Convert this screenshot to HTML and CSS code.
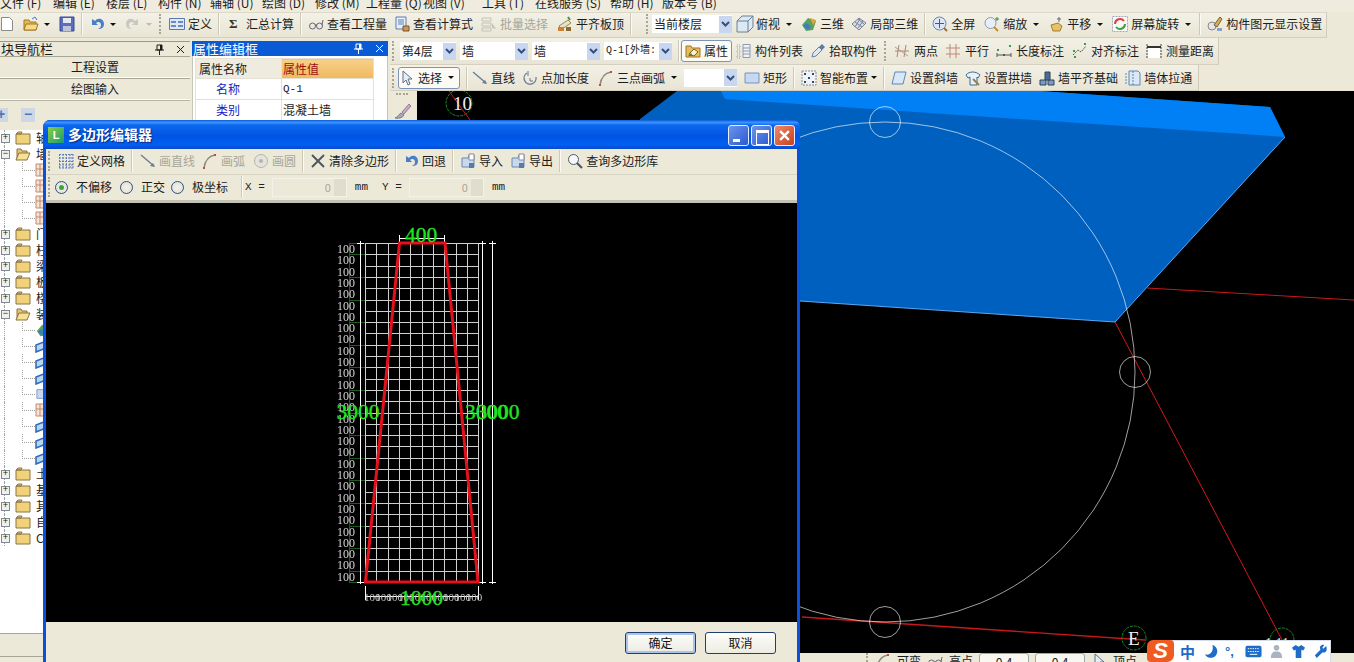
FILE: index.html
```html
<!DOCTYPE html>
<html lang="zh">
<head>
<meta charset="utf-8">
<title>多边形编辑器</title>
<link rel="stylesheet" href="styles.css">
</head>
<body>
<svg class="defs" width="0" height="0">
  <symbol id="new" viewBox="0 0 16 16"><path d="M1.500 1.500h8l3 3v10h-11z" fill="#fff" stroke="#8a8a8a"/></symbol>
  <symbol id="open" viewBox="0 0 16 16"><path d="M1 4h5l1 2h6v8H1z" fill="#e8b850" stroke="#a07820"/><path d="M3 8h12l-2 6H1z" fill="#f6d98a" stroke="#a07820"/><path d="M9 3l3-2 2 3" fill="none" stroke="#3a7ad0"/></symbol>
  <symbol id="save" viewBox="0 0 16 16"><path d="M1 1h14v14H1z" fill="#5a6fb8" stroke="#3a4a90"/><path d="M4 2h8v5H4z" fill="#e8e8f4"/><path d="M4 10h8v5H4z" fill="#c0c4d8"/></symbol>
  <symbol id="undo" viewBox="0 0 16 16"><path d="M3 3v6h6L7 7c2-2 5-1 5 2 0 2-1 3-3 4 4 0 6-2 6-5 0-5-6-7-9-3z" fill="#4a7ec8"/></symbol>
  <symbol id="redo" viewBox="0 0 16 16"><path d="M13 3v6H7l2-2C7 5 4 6 4 9c0 2 1 3 3 4-4 0-6-2-6-5 0-5 6-7 9-3z" fill="#c8c8c0"/></symbol>
  <symbol id="def" viewBox="0 0 16 16"><path d="M.5 2.500h15v11H.5z" fill="#dfe8f6" stroke="#5a7ab0"/><path d="M2 5h5v2H2zM9 5h5v2H9zM2 9h5v2H2zM9 9h5v2H9z" fill="#6a8ac0"/></symbol>
  <symbol id="glass" viewBox="0 0 16 16"><circle cx="4.500" cy="10" r="3" fill="none" stroke="#667"/><circle cx="11.500" cy="10" r="3" fill="none" stroke="#667"/><path d="M7 9h2M14 9l1-5" stroke="#667" fill="none"/></symbol>
  <symbol id="calc" viewBox="0 0 16 16"><path d="M2 1h10v12H2z" fill="#e8f0fa" stroke="#5a7ab0"/><path d="M4 4h6M4 6h6M4 8h6" stroke="#5a7ab0"/><path d="M9 10h6v5H9z" fill="#c89860" stroke="#805020"/></symbol>
  <symbol id="batch" viewBox="0 0 16 16"><path d="M1 2h9v3H1zM1 7h9v3H1zM1 12h9v3H1z" fill="none" stroke="#c4c2b6"/><path d="M11 7l4 6-4-1z" fill="#c4c2b6"/></symbol>
  <symbol id="align" viewBox="0 0 16 16"><path d="M2 10l9-6 3 3-9 6z" fill="#e8e2c8" stroke="#9a8850"/><path d="M1 11h6v4H1z" fill="#d08030"/><path d="M9 11h5v4H9z" fill="#8a6a30"/><path d="M11 1l2 3" stroke="#3a9a50" stroke-width="2"/></symbol>
  <symbol id="cube" viewBox="0 0 18 18"><path d="M1 6l5-5h11v11l-5 5H1z" fill="#dce8f4" stroke="#6a8098"/><path d="M1 6h11v11M12 6l5-5" fill="none" stroke="#6a8098"/></symbol>
  <symbol id="three" viewBox="0 0 16 16"><path d="M1 9l6-7 8 3-3 9-7 1z" fill="#5aa060"/><path d="M9 2l6 2-3 5z" fill="#e8a030"/><path d="M2 10l5 4 3-3-4-4z" fill="#3a7ec0"/></symbol>
  <symbol id="local" viewBox="0 0 16 16"><path d="M1 8l7-6 7 5-7 7z" fill="#d8dce8" stroke="#7a8298"/><path d="M4 6l7 5M7 3l6 5M9 3L4 11M12 5l-5 7" stroke="#7a8298" fill="none"/></symbol>
  <symbol id="full" viewBox="0 0 16 16"><circle cx="7.500" cy="7.500" r="6.500" fill="#dce6f6" stroke="#6a88b8"/><path d="M7.500 3v9M3 7.500h9" stroke="#3a5a90"/><path d="M12 12l3 3" stroke="#a07030" stroke-width="2"/></symbol>
  <symbol id="zoom" viewBox="0 0 16 16"><circle cx="6.500" cy="7" r="5.500" fill="#e8eef8" stroke="#8a9ab8"/><path d="M10 11l4 4" stroke="#c09030" stroke-width="2"/><path d="M13 1v4M11 3h4" stroke="#3a8a3a"/></symbol>
  <symbol id="pan" viewBox="0 0 16 16"><path d="M3 9l7-2 4 3-2 5H5z" fill="#e8c068" stroke="#a08030"/><path d="M11 1v5M9 3h4" stroke="#667"/></symbol>
  <symbol id="rot" viewBox="0 0 16 16"><path d="M.5.5h15v15H.5z" fill="#f8f8f4" stroke="#a0a8c0" stroke-dasharray="2 1"/><path d="M3 8a5 5 0 0 1 9-3" fill="none" stroke="#e04040" stroke-width="2"/><path d="M13 8a5 5 0 0 1-9 3" fill="none" stroke="#40a040" stroke-width="2"/></symbol>
  <symbol id="disp" viewBox="0 0 16 16"><circle cx="5" cy="10" r="4" fill="#e4e4ec" stroke="#888"/><path d="M7 9l6-8 2 2-5 8z" fill="#d0b060" stroke="#806020"/><path d="M10 12h5v3h-5z" fill="#8aa0c8"/></symbol>
  <symbol id="prop" viewBox="0 0 16 16"><path d="M1 3h5l1 2h8v9H1z" fill="#e6bb58" stroke="#a07828"/><path d="M4 11l5-5 4 3-4 4z" fill="#f8f0d0" stroke="#806020"/><path d="M3 13l3-3 2 3z" fill="#3a8a50"/></symbol>
  <symbol id="list" viewBox="0 0 16 16"><path d="M1 2h3v3H1zM1 7h3v3H1zM1 12h3v3H1z" fill="none" stroke="#9aa" stroke-dasharray="1 1"/><path d="M7 1.500h7v13H7z" fill="#eef2f8" stroke="#8a9ab0"/><path d="M7 5h7M7 8h7M7 11h7" stroke="#8a9ab0"/></symbol>
  <symbol id="pick" viewBox="0 0 16 16"><path d="M2 14l1-4 6-6 3 3-6 6z" fill="#dce8f4" stroke="#6a80a0"/><path d="M9 4l3-3 3 3-3 3z" fill="#5a7ab0"/></symbol>
  <symbol id="brush" viewBox="0 0 18 18"><path d="M1 16c3-1 4-4 6-5l3 2c-1 2-4 4-9 3z" fill="#a8a8b0" stroke="#807c88"/><path d="M8 10l7-8 2 2-7 8z" fill="#c8a8c8" stroke="#988098"/></symbol>
  <symbol id="two" viewBox="0 0 16 16"><path d="M1 8h14M5 2L3 14M12 2l-2 12" stroke="#a88878" fill="none"/><path d="M1 4l13 9" stroke="#b09a88"/></symbol>
  <symbol id="par" viewBox="0 0 16 16"><path d="M1 5h14M1 11h14M5 1v14M11 1v14" stroke="#c08878" fill="none"/></symbol>
  <symbol id="len" viewBox="0 0 16 16"><path d="M1 12h14M1 10v4M15 10v4M7 11l2 2M7 13l2-2" stroke="#555" fill="none"/><path d="M1 7h2M13 3h2" stroke="#3a9a50" stroke-width="2"/></symbol>
  <symbol id="alg" viewBox="0 0 16 16"><path d="M2 12l5-5 3 2 5-6" stroke="#555" fill="none" stroke-dasharray="2 1"/><path d="M2 8h2M13 1h2M3 14h2" stroke="#3a9a50" stroke-width="2"/></symbol>
  <symbol id="meas" viewBox="0 0 16 16"><path d="M2 4h12v11H2z" fill="#fff"/><path d="M1 1v15M15 1v15" stroke="#444" stroke-dasharray="2 1"/><path d="M1 4h14" stroke="#333" stroke-width="2"/></symbol>
  <symbol id="cur" viewBox="0 0 16 16"><path d="M4 1v12l3-3 2 5 2-1-2-5h4z" fill="#e8eef8" stroke="#5a7090"/></symbol>
  <symbol id="line" viewBox="0 0 16 16"><path d="M1 2l13 11" stroke="#6a7a90" stroke-width="1.300"/><path d="M15 14l-5-1 3-3z" fill="#6a7a90"/></symbol>
  <symbol id="add" viewBox="0 0 16 16"><path d="M5 3a6 6 0 1 0 9 4" fill="none" stroke="#6a7a90" stroke-width="1.300"/><path d="M6 1v5M8 8v3h3" stroke="#6a7a90" fill="none"/></symbol>
  <symbol id="arc" viewBox="0 0 16 16"><path d="M2 15C3 8 7 3 13 2" fill="none" stroke="#8a8a80" stroke-width="1.500"/><path d="M1 14h2v2H1zM12 1h2v2h-2z" fill="#c05030"/></symbol>
  <symbol id="rect" viewBox="0 0 16 16"><path d="M1 3h14v10H1z" fill="#c6d8f2" stroke="#7a94bc"/></symbol>
  <symbol id="smart" viewBox="0 0 16 16"><path d="M1 1h14v14H1z" fill="#f0f2f6" stroke="#8a8a8a" stroke-dasharray="2 1"/><path d="M7 7h2v2H7zM3 3h2v2H3zM11 3h2v2h-2zM3 11h2v2H3zM11 11h2v2h-2z" fill="#2a4a80"/></symbol>
  <symbol id="slant" viewBox="0 0 16 16"><path d="M4 2h11l-3 12H1z" fill="#d8e8f8" stroke="#5a88b8"/></symbol>
  <symbol id="archw" viewBox="0 0 16 16"><path d="M1 5c3-4 10-4 14 0l-2 3-1-1v8H5V7L3 8z" fill="#e8f0f8" stroke="#3a6a90"/><path d="M8 9l6 6" stroke="#a08040" stroke-width="2"/></symbol>
  <symbol id="base" viewBox="0 0 16 16"><path d="M1 10h6v5H1zM9 10h6v5H9z" fill="#7a98c8" stroke="#345"/><path d="M6 2h5v8H6z" fill="#4a6a9a" stroke="#345"/></symbol>
  <symbol id="pull" viewBox="0 0 16 16"><path d="M4 1h9l2 2v12H4z" fill="#dce8f6" stroke="#5a88b0"/><path d="M1 3v11M8 1v14" stroke="#5a88b0" stroke-dasharray="2 1"/></symbol>
  <symbol id="grid" viewBox="0 0 16 16"><path d="M1.500 1v14M5 1v14M8.500 1v14M12 1v14M15 1v14M1 1.500h14M1 5h14M1 8.500h14M1 12h14M1 15h14" stroke="#5a80c0" stroke-dasharray="2 1"/></symbol>
  <symbol id="cross" viewBox="0 0 16 16"><path d="M2 2l12 12M14 2L2 14" stroke="#50585e" stroke-width="2"/></symbol>
  <symbol id="circ" viewBox="0 0 16 16"><circle cx="8" cy="8" r="6.500" fill="#e4e4dc" stroke="#b4b4ac"/><circle cx="8" cy="8" r="2" fill="#b4b4ac"/></symbol>
  <symbol id="imp" viewBox="0 0 16 16"><path d="M2 5h6l1-3h5v12H2z" fill="#c8d8ee" stroke="#6a88b0"/><path d="M9 1h5v6H9z" fill="#fff" stroke="#889"/><path d="M9 10h5v5H9z" fill="#5a78a8"/></symbol>
  <symbol id="find" viewBox="0 0 16 16"><circle cx="6.500" cy="6.500" r="5" fill="#f4f8fc" stroke="#556"/><path d="M10 10l5 5" stroke="#556" stroke-width="2.200"/></symbol>
  <symbol id="closed" viewBox="0 0 16 14"><path d="M1 3h5l1-2H3L1 3zM1 3h14v10H1z" fill="#f0d27a" stroke="#8a7440"/></symbol>
  <symbol id="opened" viewBox="0 0 16 14"><path d="M2 13V2h4l1 2h5v2" fill="#e8c468" stroke="#8a7440"/><path d="M1 13l3-7h11l-3 7z" fill="#f8e098" stroke="#8a7440"/></symbol>
  <symbol id="leaf" viewBox="0 0 16 14"><path d="M1 1h14v12H1z" fill="#f4e4d8" stroke="#c88868"/><path d="M1 6h14M5 1v12" stroke="#c88868"/></symbol>
  <symbol id="leafb" viewBox="0 0 16 14"><path d="M1 13l10-4V2L1 6z" fill="#bcd4f0" stroke="#2a6ab8" stroke-width="1.500"/></symbol>
  <symbol id="pin" viewBox="0 0 9 11"><path d="M2 1h5v5H2zM0 6h9M4.500 6v5" fill="none" stroke="currentColor"/><path d="M5 1h2v5H5z" fill="currentColor"/></symbol>
  <symbol id="close" viewBox="0 0 9 9"><path d="M1 1l7 7M8 1L1 8" stroke="currentColor"/></symbol>
  <symbol id="chev" viewBox="0 0 9 6"><path d="M1 1l3.500 3.500L8 1" fill="none" stroke="#34507c" stroke-width="2"/></symbol>
</svg>

<div class="menu">
  <span>文件 (F)</span><span>编辑 (E)</span><span>楼层 (L)</span><span>构件 (N)</span><span>辅轴 (U)</span><span>绘图 (D)</span><span>修改 (M)</span><span>工程量 (Q)</span><span>视图 (V)</span><span>工具 (T)</span><span>在线服务 (S)</span><span>帮助 (H)</span><span>版本号 (B)</span>
</div>

<div class="bar bar-top">
  <svg class="ic"><use href="#new"/></svg>
  <svg class="ic"><use href="#open"/></svg><i class="drop"></i>
  <svg class="ic"><use href="#save"/></svg>
  <i class="sep"></i>
  <svg class="ic"><use href="#undo"/></svg><i class="drop"></i>
  <svg class="ic"><use href="#redo"/></svg><i class="drop off"></i>
  <i class="grip grip-defs"></i>
  <span class="tool"><svg class="ic"><use href="#def"/></svg>定义</span>
  <i class="sep"></i>
  <span class="tool"><b class="sigma">Σ</b>汇总计算</span>
  <i class="sep"></i>
  <span class="tool"><svg class="ic"><use href="#glass"/></svg>查看工程量</span>
  <span class="tool"><svg class="ic"><use href="#calc"/></svg>查看计算式</span>
  <span class="tool off ml1"><svg class="ic"><use href="#batch"/></svg>批量选择</span>
  <span class="tool ml2"><svg class="ic"><use href="#align"/></svg>平齐板顶</span>
  <i class="sep"></i>
  <i class="grip gap-grip"></i>
  <span class="sel sel-floor"><span class="sel-text">当前楼层</span><span class="sel-btn"><svg class="chev"><use href="#chev"/></svg></span></span>
  <span class="tool tool-view"><svg class="ic ic-lg"><use href="#cube"/></svg>俯视<i class="drop"></i></span>
  <span class="tool"><svg class="ic"><use href="#three"/></svg>三维</span>
  <span class="tool"><svg class="ic"><use href="#local"/></svg>局部三维</span>
  <i class="sep"></i>
  <span class="tool"><svg class="ic"><use href="#full"/></svg>全屏</span>
  <span class="tool ml2"><svg class="ic"><use href="#zoom"/></svg>缩放<i class="drop"></i></span>
  <span class="tool"><svg class="ic"><use href="#pan"/></svg>平移<i class="drop"></i></span>
  <span class="tool"><svg class="ic"><use href="#rot"/></svg>屏幕旋转<i class="drop"></i></span>
  <i class="sep"></i>
  <span class="tool"><svg class="ic"><use href="#disp"/></svg>构件图元显示设置</span>
</div>

<div class="workspace">
  <aside class="nav">
    <div class="pane-head"><span>块导航栏</span><span class="pane-ctl"><svg class="pin"><use href="#pin"/></svg><svg class="x"><use href="#close"/></svg></span></div>
    <div class="nav-btn">工程设置</div>
    <div class="nav-btn">绘图输入</div>
    <div class="tree-tools"><span class="mini mini-plus">+</span><span class="mini">−</span></div>
    <ul class="tree">
      <li><i class="box">+</i><svg class="fold"><use href="#closed"/></svg>轴网</li>
      <li><i class="box">−</i><svg class="fold"><use href="#opened"/></svg>墙</li>
      <li class="kid"><svg class="leaf"><use href="#leaf"/></svg></li>
      <li class="kid"><svg class="leaf"><use href="#leaf"/></svg></li>
      <li class="kid"><svg class="leaf"><use href="#leaf"/></svg></li>
      <li class="kid"><svg class="leaf"><use href="#leaf"/></svg></li>
      <li><i class="box">+</i><svg class="fold"><use href="#closed"/></svg>门窗洞</li>
      <li><i class="box">+</i><svg class="fold"><use href="#closed"/></svg>柱</li>
      <li><i class="box">+</i><svg class="fold"><use href="#closed"/></svg>梁</li>
      <li><i class="box">+</i><svg class="fold"><use href="#closed"/></svg>板</li>
      <li><i class="box">+</i><svg class="fold"><use href="#closed"/></svg>楼梯</li>
      <li><i class="box">−</i><svg class="fold"><use href="#opened"/></svg>装修</li>
      <li class="kid"><svg class="leaf"><use href="#three"/></svg></li>
      <li class="kid"><svg class="leaf"><use href="#leafb"/></svg></li>
      <li class="kid"><svg class="leaf"><use href="#leafb"/></svg></li>
      <li class="kid"><svg class="leaf"><use href="#leafb"/></svg></li>
      <li class="kid"><svg class="leaf"><use href="#rect"/></svg></li>
      <li class="kid"><svg class="leaf"><use href="#leaf"/></svg></li>
      <li class="kid"><svg class="leaf"><use href="#leafb"/></svg></li>
      <li class="kid"><svg class="leaf"><use href="#leafb"/></svg></li>
      <li class="kid"><svg class="leaf"><use href="#leafb"/></svg></li>
      <li><i class="box">+</i><svg class="fold"><use href="#closed"/></svg>土方</li>
      <li><i class="box">+</i><svg class="fold"><use href="#closed"/></svg>基础</li>
      <li><i class="box">+</i><svg class="fold"><use href="#closed"/></svg>其它</li>
      <li><i class="box">+</i><svg class="fold"><use href="#closed"/></svg>自定义</li>
      <li><i class="box">+</i><svg class="fold"><use href="#closed"/></svg>CAD识别</li>
    </ul>
    <div class="nav-foot"></div>
    <div class="nav-foot nav-foot-b"></div>
  </aside>

  <section class="props">
    <div class="pane-head pane-active"><span>属性编辑框</span><span class="pane-ctl"><svg class="pin"><use href="#pin"/></svg><svg class="x"><use href="#close"/></svg></span></div>
    <div class="props-body">
      <table class="ptable">
        <tr><th>属性名称</th><th class="val-head">属性值</th></tr>
        <tr><td class="pname">名称</td><td class="mono">Q-1</td></tr>
        <tr><td class="pname">类别</td><td>混凝土墙</td></tr>
      </table>
    </div>
  </section>

  <main class="main">
    <div class="bar bar-two">
      <i class="grip"></i>
      <span class="sel sel-a"><span class="sel-text">第4层</span><span class="sel-btn"><svg class="chev"><use href="#chev"/></svg></span></span>
      <span class="sel sel-b"><span class="sel-text">墙</span><span class="sel-btn"><svg class="chev"><use href="#chev"/></svg></span></span>
      <span class="sel sel-b"><span class="sel-text">墙</span><span class="sel-btn"><svg class="chev"><use href="#chev"/></svg></span></span>
      <span class="sel sel-b"><span class="sel-text sel-mono">Q-1[外墙:</span><span class="sel-btn"><svg class="chev"><use href="#chev"/></svg></span></span>
      <i class="sep"></i>
      <span class="tool pressed pressed-prop"><svg class="ic"><use href="#prop"/></svg>属性</span>
      <span class="tool tool-list"><svg class="ic"><use href="#list"/></svg>构件列表</span>
      <span class="tool"><svg class="ic"><use href="#pick"/></svg>拾取构件</span>
      <i class="grip"></i>
      <span class="tool roomy"><svg class="ic"><use href="#two"/></svg>两点</span>
      <span class="tool roomy"><svg class="ic"><use href="#par"/></svg>平行</span>
      <span class="tool roomy"><svg class="ic"><use href="#len"/></svg>长度标注</span>
      <span class="tool roomy"><svg class="ic"><use href="#alg"/></svg>对齐标注</span>
      <span class="tool roomy"><svg class="ic"><use href="#meas"/></svg>测量距离</span>
    </div>
    <div class="bar bar-three">
      <i class="grip"></i>
      <span class="tool pressed pressed-sel"><svg class="ic"><use href="#cur"/></svg>选择<i class="drop"></i></span>
      <i class="sep"></i>
      <span class="tool tool-line"><svg class="ic"><use href="#line"/></svg>直线</span>
      <span class="tool"><svg class="ic"><use href="#add"/></svg>点加长度</span>
      <span class="tool ml2"><svg class="ic"><use href="#arc"/></svg>三点画弧<i class="drop"></i></span>
      <span class="sel sel-d"><span class="sel-text"></span><span class="sel-btn"><svg class="chev"><use href="#chev"/></svg></span></span>
      <span class="tool"><svg class="ic"><use href="#rect"/></svg>矩形</span>
      <i class="sep"></i>
      <span class="tool tool-smart"><svg class="ic"><use href="#smart"/></svg>智能布置<i class="drop"></i></span>
      <i class="sep"></i>
      <span class="tool"><svg class="ic"><use href="#slant"/></svg>设置斜墙</span>
      <span class="tool"><svg class="ic"><use href="#archw"/></svg>设置拱墙</span>
      <span class="tool"><svg class="ic"><use href="#base"/></svg>墙平齐基础</span>
      <span class="tool"><svg class="ic"><use href="#pull"/></svg>墙体拉通</span>
    </div>
    <div class="stage">
      <div class="side-strip"><i class="strip-grip"></i><svg class="ic-lg"><use href="#brush"/></svg></div>
      <svg class="cad" viewBox="417 91 937 562">
        <polygon points="640,119 677,91 1040,91 1270,107 1285,137 1115,322 800,301 640,301" fill="#0060c0"/>
        <polygon points="721,91 1040,91 1270,107 1285,137 725,99" fill="#0080f4"/>
        <line x1="1285" y1="137" x2="1115" y2="322" stroke="#5aa8f0"/>
        <line x1="800" y1="301" x2="1115" y2="322" stroke="#5aa8f0"/>
        <line x1="1147" y1="288" x2="1354" y2="300" stroke="#c81818"/>
        <line x1="1115" y1="322" x2="1282" y2="640" stroke="#d81818"/>
        <line x1="802" y1="617" x2="1145" y2="640" stroke="#c81818" stroke-width="1.300"/>
        <g fill="none" stroke="#fff" stroke-opacity=".62">
          <circle cx="885" cy="372" r="250"/>
          <circle cx="885" cy="122" r="15.500"/>
          <circle cx="1135" cy="372" r="15.500"/>
          <circle cx="885" cy="622" r="15.500"/>
        </g>
        <g fill="none" stroke="#1a8a2a" stroke-dasharray="3 1">
          <circle cx="459" cy="103" r="13"/>
          <circle cx="1134" cy="638" r="12"/>
          <circle cx="1282" cy="640" r="12"/>
        </g>
        <line x1="449" y1="91" x2="470" y2="120" stroke="#c81818"/>
        <text class="axis" x="453" y="110">10</text>
        <text class="axis" x="1128" y="645">E</text>
        <text class="axis axis-sm" x="1265" y="648">1 11</text>
      </svg>
    </div>
    <div class="status">
      <i class="grip"></i>
      <svg class="ic"><use href="#arc"/></svg><span>可变</span>
      <svg class="ic"><use href="#glass"/></svg><span>高点</span>
      <span class="st-box">0.4</span><span class="st-box">0.4</span>
      <svg class="ic"><use href="#cur"/></svg><span>顶点</span>
    </div>
  </main>
</div>

<div class="dialog">
  <div class="dlg-title">
    <span class="dlg-logo">L</span>
    <span class="dlg-name">多边形编辑器</span>
    <span class="win-btns">
      <span class="win win-min"></span>
      <span class="win win-max"></span>
      <span class="win win-close"><svg viewBox="0 0 12 12"><path d="M2 2l8 8M10 2l-8 8" stroke="#fff" stroke-width="2.200"/></svg></span>
    </span>
  </div>
  <div class="dlg-body">
    <div class="bar dlg-bar">
      <i class="grip"></i>
      <span class="tool"><svg class="ic"><use href="#grid"/></svg>定义网格</span>
      <i class="sep"></i>
      <span class="tool off ml1"><svg class="ic"><use href="#line"/></svg>画直线</span>
      <span class="tool off"><svg class="ic"><use href="#arc"/></svg>画弧</span>
      <span class="tool off ml1"><svg class="ic"><use href="#circ"/></svg>画圆</span>
      <i class="sep"></i>
      <span class="tool"><svg class="ic"><use href="#cross"/></svg>清除多边形</span>
      <i class="sep"></i>
      <span class="tool"><svg class="ic"><use href="#undo"/></svg>回退</span>
      <i class="sep"></i>
      <span class="tool"><svg class="ic"><use href="#imp"/></svg>导入</span>
      <span class="tool"><svg class="ic"><use href="#imp"/></svg>导出</span>
      <i class="sep"></i>
      <span class="tool"><svg class="ic"><use href="#find"/></svg>查询多边形库</span>
    </div>
    <div class="bar dlg-bar dlg-bar-two">
      <i class="grip"></i>
      <label class="radio radio-first"><i class="dot on"></i>不偏移</label>
      <label class="radio"><i class="dot"></i>正交</label>
      <label class="radio radio-last"><i class="dot"></i>极坐标</label>
      <i class="sep sep-coord"></i>
      <span class="coord coord-x">X =</span>
      <span class="num"><span class="num-val">0</span><span class="spin"></span></span>
      <span class="coord">mm</span>
      <span class="coord coord-y">Y =</span>
      <span class="num"><span class="num-val">0</span><span class="spin"></span></span>
      <span class="coord">mm</span>
    </div>
    <svg class="poly" viewBox="46 203 751 419">
      <g fill="none" stroke="#1d5a1d">
        <path d="M349.500 243V582"/>
        <path d="M349 243.500h16M349 254.500h16M349 277.500h16M349 300.500h16M349 322.500h16M349 345.500h16M349 367.500h16M349 390.500h16M349 413.500h16M349 435.500h16M349 458.500h16M349 480.500h16M349 503.500h16M349 526.500h16M349 548.500h16M349 571.500h16M349 582.500h16"/>
      </g>
      <path fill="none" stroke="#cfcfcf" d="M365.500 243V582M376.500 243V582M388.500 243V582M399.500 243V582M410.500 243V582M422.500 243V582M433.500 243V582M444.500 243V582M456.500 243V582M467.500 243V582M478.500 243V582M365 243.500H479M365 254.500H479M365 266.500H479M365 277.500H479M365 288.500H479M365 300.500H479M365 311.500H479M365 322.500H479M365 333.500H479M365 345.500H479M365 356.500H479M365 367.500H479M365 379.500H479M365 390.500H479M365 401.500H479M365 413.500H479M365 424.500H479M365 435.500H479M365 446.500H479M365 458.500H479M365 469.500H479M365 480.500H479M365 492.500H479M365 503.500H479M365 514.500H479M365 526.500H479M365 537.500H479M365 548.500H479M365 559.500H479M365 571.500H479M365 582.500H479"/>
      <path fill="none" stroke="#fff" d="M360.500 241V584M482.500 241V584M492.500 241V584M357 243.500h7M479 243.500h7M489 243.500h7M357 582.500h7M479 582.500h7M489 582.500h7M399 238.500h46M399.500 235v7M444.500 235v7M365 596.500h114M365.500 586v14M478.500 586v14"/>
      <polygon points="365.500,582 399.500,243 445,243 478,582" fill="none" stroke="#e4101c" stroke-width="3"/>
      <text class="hund"><tspan x="337" y="253">100</tspan><tspan x="337" y="264.300">100</tspan><tspan x="337" y="275.600">100</tspan><tspan x="337" y="286.900">100</tspan><tspan x="337" y="298.200">100</tspan><tspan x="337" y="309.500">100</tspan><tspan x="337" y="320.800">100</tspan><tspan x="337" y="332.100">100</tspan><tspan x="337" y="343.400">100</tspan><tspan x="337" y="354.700">100</tspan><tspan x="337" y="366">100</tspan><tspan x="337" y="377.300">100</tspan><tspan x="337" y="388.600">100</tspan><tspan x="337" y="399.900">100</tspan><tspan x="337" y="411.200">100</tspan><tspan x="337" y="422.500">100</tspan><tspan x="337" y="433.800">100</tspan><tspan x="337" y="445.100">100</tspan><tspan x="337" y="456.400">100</tspan><tspan x="337" y="467.700">100</tspan><tspan x="337" y="479">100</tspan><tspan x="337" y="490.300">100</tspan><tspan x="337" y="501.600">100</tspan><tspan x="337" y="512.900">100</tspan><tspan x="337" y="524.200">100</tspan><tspan x="337" y="535.500">100</tspan><tspan x="337" y="546.800">100</tspan><tspan x="337" y="558.100">100</tspan><tspan x="337" y="569.400">100</tspan><tspan x="337" y="580.700">100</tspan></text>
      <text class="hund hund-b" y="601"><tspan x="364">100</tspan><tspan x="375.300">100</tspan><tspan x="386.600">100</tspan><tspan x="397.900">100</tspan><tspan x="409.200">100</tspan><tspan x="420.500">100</tspan><tspan x="431.800">100</tspan><tspan x="443.100">100</tspan><tspan x="454.400">100</tspan><tspan x="465.700">100</tspan></text>
      <text class="dim" x="405" y="242">400</text>
      <text class="dim" x="336.500" y="419">3000</text>
      <text class="dim" x="465" y="419">3000</text>
      <text class="dim" x="476.500" y="419">3000</text>
      <text class="dim" x="400" y="605">1000</text>
    </svg>
    <div class="dlg-foot">
      <button class="btn btn-def" type="button">确定</button>
      <button class="btn" type="button">取消</button>
    </div>
  </div>
</div>

<div class="ime">
  <span class="ime-logo"><b>S</b></span>
  <span class="ime-bar">
    <b class="ime-zh">中</b>
    <svg class="ime-ic" viewBox="0 0 16 16"><path d="M10 1a7 7 0 1 1-8 10c5 2 10-3 8-10z" fill="#1c6cc8"/></svg>
    <span class="ime-punc">°,</span>
    <svg class="ime-ic ime-kb" viewBox="0 0 18 14"><rect x=".5" y="1" width="17" height="12" rx="2" fill="#1c6cc8"/><path d="M3 4h12M3 7h12" stroke="#fff" stroke-dasharray="1.500 1"/><path d="M5 10h8" stroke="#fff"/></svg>
    <svg class="ime-ic" viewBox="0 0 16 16"><circle cx="8" cy="4" r="3" fill="#aab4c0"/><path d="M2 15c0-5 2-7 6-7s6 2 6 7z" fill="#aab4c0"/></svg>
    <svg class="ime-ic" viewBox="0 0 16 16"><path d="M5 1L1 4l2 3 2-1v9h6V6l2 1 2-3-4-3-3 2z" fill="#1c6cc8"/></svg>
    <svg class="ime-ic" viewBox="0 0 16 16"><path d="M14 2l-3 3-1-1 2-3c-3-1-6 2-4 5l-6 6 2 3 6-6c3 1 6-2 4-7z" fill="#1c6cc8"/></svg>
  </span>
</div>
</body>
</html>
```
FILE: styles.css
```css
* { box-sizing: border-box; }
html, body { margin: 0; padding: 0; }
body {
  width: 1354px;
  height: 662px;
  overflow: hidden;
  position: relative;
  background: #ece9d8;
  color: #1c1c1c;
  font: 12px/16px "Noto Sans CJK SC", "Liberation Sans", sans-serif;
}
i { font-style: normal; }
.defs { position: absolute; }

.menu {
  height: 12px;
  line-height: 5px;
  display: grid;
  grid-template-columns: 53px 53px 52px 52px 52px 53px 51px 57px 59px 53px 75px 52px 60px;
  white-space: nowrap;
  background: #efecdf;
}

.bar {
  display: flex;
  align-items: center;
  gap: 7px;
  white-space: nowrap;
  background: linear-gradient(#f3f1e6, #e8e5d5);
}
.bar-top {
  height: 26px;
  width: 1327px;
  padding-bottom: 2px;
  border-top: 1px solid #dcd9c8;
  border-bottom: 1px solid #d4d0bd;
  border-right: 1px solid #cfcbb8;
}
.bar-two, .bar-three {
  height: 27px;
  padding-left: 2px;
  border-bottom: 1px solid #d4d0bd;
  border-right: 1px solid #cfcbb8;
}
.bar-two { width: 829px; }
.bar-three { width: 809px; height: 26px; }

.ic { width: 16px; height: 16px; flex: none; }
.ic-lg { width: 18px; height: 18px; flex: none; }
.tool { display: inline-flex; align-items: center; gap: 3px; }
.tool.off { color: #a8a699; }
.roomy { gap: 4px; }
.ml1 { margin-left: 1px; }
.ml2 { margin-left: 2px; }
.tool-view { margin-left: -3px; gap: 2px; }
.tool-view .drop { margin-left: 4px; }
.tool-list { margin-left: -3px; }
.tool-line { margin-left: -2px; }
.tool-smart { margin-right: -2px; }
.tool-smart .drop { margin-left: 0; }
.drop {
  display: inline-block;
  width: 0;
  height: 0;
  flex: none;
  margin: 0 2px 0 3px;
  border: 3px solid transparent;
  border-top: 3px solid #111;
  border-bottom: 0;
}
.bar > .drop { margin: 0 2px 0 -2px; }
.drop.off { border-top-color: #bdbbae; }
.sep {
  width: 2px;
  height: 22px;
  flex: none;
  margin: 0 -1px;
  border-left: 1px solid #cdc9b6;
  border-right: 1px solid #fbfaf4;
}
.grip {
  width: 3px;
  height: 20px;
  flex: none;
  border-left: 2px dotted #a8a594;
}
.grip-defs { margin-left: -2px; }
.gap-grip { margin-left: 8px; margin-right: -4px; }
.sigma { width: 17px; padding-left: 3px; flex: none; font: 700 13px/16px "Liberation Serif", serif; color: #333; }

.sel { display: inline-flex; align-items: center; height: 18px; background: #fff; flex: none; }
.sel-text { flex: 1; padding-left: 2px; overflow: hidden; }
.sel-mono { font-family: "Liberation Mono", "Noto Sans CJK SC", monospace; font-size: 10px; }
.sel-btn { width: 13px; height: 17px; background: #c9d6ef; display: flex; align-items: center; justify-content: center; }
.chev { width: 9px; height: 6px; }
.sel-floor { width: 80px; }
.sel-a { width: 56px; margin-left: -2px; }
.sel-b { width: 68px; margin-left: -3px; }
.sel-d { width: 53px; margin-left: -2px; }

.pressed { height: 22px; padding: 0 3px; background: #fbfaf4; border: 1px solid #7d94b4; border-radius: 3px; }
.pressed-prop { margin-left: -5px; }
.pressed-sel { width: 62px; margin-left: -4px; padding-left: 0; }

.workspace { display: flex; height: 624px; }

.nav { width: 190px; flex: none; display: flex; flex-direction: column; }
.pane-head {
  height: 15px;
  margin-top: 3px;
  padding: 0 5px 0 1px;
  flex: none;
  display: flex;
  justify-content: space-between;
  align-items: center;
  font-size: 13px;
  border-top: 1px solid #9a988a;
}
.pane-ctl { display: flex; align-items: center; gap: 12px; }
.pin { width: 9px; height: 11px; }
.x { width: 9px; height: 9px; }
.nav-btn {
  height: 22px;
  flex: none;
  text-align: center;
  line-height: 19px;
  background: #ece9d8;
  border-top: 1px solid #a8a694;
  border-bottom: 1px solid #fff;
}
.tree-tools { height: 30px; flex: none; display: flex; gap: 13px; padding: 7px 0 0; background: #ece9d8; border-top: 1px solid #b8b6a6; overflow: hidden; }
.mini { width: 14px; height: 14px; flex: none; font: 700 14px/13px "Liberation Sans", sans-serif; text-align: center; color: #4a7ab8; background: #cfd6e4; }
.mini-plus { margin-left: -6px; }
.tree { margin: 0; padding: 0; list-style: none; flex: 1; background: #fff; overflow: hidden; }
.tree li { height: 16px; display: flex; align-items: center; position: relative; white-space: nowrap; padding-left: 1px; }
.tree li::before { content: ""; position: absolute; left: 4px; top: 0; height: 16px; border-left: 1px dotted #a0a0a0; }
.box {
  width: 9px;
  height: 9px;
  margin: 0 5px 0 0;
  flex: none;
  border: 1px solid #7d8a96;
  font: 9px/7px "Liberation Mono", monospace;
  text-align: center;
  background: #f0f0e8;
  position: relative;
}
.fold { width: 16px; height: 14px; margin: 0 5px 0 0; flex: none; }
.tree li.kid { padding-left: 35px; }
.kid::after { content: ""; position: absolute; left: 22px; top: 0; width: 12px; height: 8px; border-left: 1px dotted #a0a0a0; border-bottom: 1px dotted #a0a0a0; }
.leaf { width: 16px; height: 14px; }
.nav-foot { height: 23px; flex: none; border-top: 1px solid #a8a694; }
.nav-foot-b { height: 6px; }

.props { width: 196px; margin-left: 2px; flex: none; display: flex; flex-direction: column; }
.pane-active { background: #0a5ad6; color: #fff; border-top: 0; padding-right: 4px; }
.props-body { flex: 1; background: #fff; padding: 2px 12px 0 2px; border: 1px solid #c8c6b6; border-top: 0; }
.ptable { width: 179px; border-collapse: collapse; table-layout: fixed; }
.ptable th, .ptable td { height: 21px; padding: 0 3px; font-weight: 400; text-align: left; line-height: 14px; border: 1px solid #e4e2d6; }
.ptable th:first-child { width: 86px; }
.ptable th { background: #efecdf; height: 20px; }
.ptable th + th, .ptable td + td { padding-left: 1px; }
.ptable .val-head { background: linear-gradient(#f8d088, #f0b860); color: #9a1010; }
.ptable .pname { color: #1a1ac0; padding-left: 20px; }
.mono { font-family: "Liberation Mono", monospace; font-size: 11px; }

.main { flex: 1; min-width: 0; margin-left: 2px; display: flex; flex-direction: column; }
.stage { flex: 1; min-height: 0; display: flex; }
.side-strip { width: 27px; flex: none; padding: 0 0 0 4px; display: flex; flex-direction: column; gap: 7px; }
.strip-grip { height: 2px; width: 12px; margin: 2px 0 0 2px; border-top: 2px dotted #a8a594; }
.cad { width: 937px; height: 562px; display: block; background: #000; flex: none; }
.axis { font: 19px "Liberation Serif", serif; fill: #f0f0f0; }
.axis-sm { font-size: 14px; }

.status { height: 9px; display: flex; gap: 6px; padding-left: 476px; overflow: hidden; background: #ece9d8; align-items: flex-start; }
.st-box { width: 50px; height: 16px; background: #f8f8f0; border: 1px solid #9aa; border-radius: 3px; text-align: center; }

.dialog {
  position: absolute;
  left: 43px;
  top: 120px;
  width: 757px;
  height: 545px;
  display: flex;
  flex-direction: column;
  border-radius: 7px 7px 0 0;
  background: #0a50dc;
  padding: 0 3px 3px;
}
.dlg-title {
  height: 29px;
  margin: 0 -3px;
  padding: 1px 5px 0;
  flex: none;
  display: flex;
  align-items: center;
  border-radius: 7px 7px 0 0;
  background: linear-gradient(#0a57d8 0, #3d95ff 8%, #0c68ee 18%, #0054e3 55%, #0060f2 85%, #0a4ac8 100%);
}
.dlg-logo {
  width: 16px;
  height: 16px;
  margin-right: 4px;
  background: linear-gradient(135deg, #8ad040, #1a9a70);
  color: #fff;
  font: 700 11px/16px "Liberation Sans", sans-serif;
  text-align: center;
}
.dlg-name { flex: 1; margin-top: -3px; color: #fff; font-size: 14px; line-height: 14px; font-weight: 700; text-shadow: 1px 1px 1px #0a2a80; }
.win-btns { display: flex; gap: 2px; }
.win {
  width: 21px;
  height: 21px;
  border: 1px solid #e8eefc;
  border-radius: 3px;
  background: linear-gradient(135deg, #6c94ec, #2a5ad0);
  position: relative;
  display: block;
}
.win-min::after { content: ""; position: absolute; left: 4px; bottom: 3px; width: 7px; height: 3px; background: #fff; }
.win-max::after { content: ""; position: absolute; left: 4px; top: 4px; width: 11px; height: 11px; border: 1px solid #fff; border-top-width: 3px; }
.win-close { background: linear-gradient(135deg, #ec8a6a, #c8401c); }
.win-close svg { display: block; width: 13px; height: 13px; margin: 3px; }

.dlg-body { flex: 1; min-height: 0; background: #ece9d8; display: flex; flex-direction: column; }
.dlg-bar { height: 26px; flex: none; padding: 0 0 2px 2px; background: #ece9d8; border-bottom: 1px solid #d6d3c2; }
.dlg-bar-two { height: 28px; padding-bottom: 1px; border-bottom: 3px solid #c4c2b4; gap: 8px; }
.radio { display: inline-flex; align-items: center; gap: 8px; }
.radio-first { margin-left: -4px; }
.radio-last { margin-left: -2px; }
.dot {
  width: 13px;
  height: 13px;
  flex: none;
  border: 1px solid #30507c;
  border-radius: 50%;
  background: radial-gradient(#f4f4ee, #dcdcd0);
  position: relative;
}
.dot.on::after { content: ""; position: absolute; left: 3px; top: 3px; width: 5px; height: 5px; border-radius: 50%; background: #38a838; }
.sep-coord { margin-left: 5px; }
.coord { font: 11px/16px "Liberation Mono", monospace; color: #222; }
.coord-x { margin: 0 -2px 0 -5px; }
.coord-y { margin: 0 -2px 0 6px; }
.num { width: 75px; height: 19px; display: flex; align-items: center; border: 1px solid #f4f3ea; flex: none; margin-left: 1px; }
.num-val { flex: 1; text-align: right; padding-right: 3px; color: #a8a699; font-size: 11px; }
.spin { width: 12px; height: 17px; background: #e0ddcc; }
.poly { width: 751px; height: 419px; display: block; background: #000; flex: none; }
.hund { font: 12px "Liberation Serif", serif; fill: #d4d4d4; filter: blur(.3px); }
.hund-b { font-size: 11px; fill: #c4c4c4; }
.dim { font: 21.500px "Liberation Serif", serif; fill: #20e420; stroke: #20e420; stroke-width: .35; }
.dlg-foot { flex: 1; display: flex; justify-content: flex-end; gap: 9px; padding: 10px 21px 0 0; align-items: flex-start; }
.btn {
  width: 71px;
  height: 22px;
  padding: 0;
  font: 12px/18px "Noto Sans CJK SC", sans-serif;
  color: #111;
  border: 1px solid #1f3f70;
  border-radius: 3px;
  background: linear-gradient(#fdfdfa, #ecebe3);
}
.btn-def { box-shadow: inset 0 0 0 2px #a8c4ec; }

.ime { position: absolute; left: 1147px; top: 640px; width: 184px; height: 22px; display: flex; }
.ime-logo {
  width: 27px;
  height: 22px;
  position: absolute;
  left: 0;
  top: 0;
  background: #ef5b20;
  border-radius: 6px 4px 7px 4px;
  color: #fff;
  text-align: center;
  font: italic 700 22px/22px "Liberation Sans", sans-serif;
  z-index: 1;
}
.ime-bar {
  margin-left: 18px;
  flex: 1;
  display: flex;
  align-items: center;
  gap: 7px;
  padding-left: 15px;
  background: #fff;
  border-top: 1px solid #d4dcec;
  border-right: 1px solid #d4dcec;
}
.ime-zh { color: #1c6cc8; font-size: 15px; margin-right: 1px; }
.ime-ic { width: 15px; height: 15px; flex: none; }
.ime-kb { width: 17px; }
.ime-punc { color: #1c6cc8; font: 700 13px/16px "Liberation Sans", sans-serif; width: 13px; }
```
